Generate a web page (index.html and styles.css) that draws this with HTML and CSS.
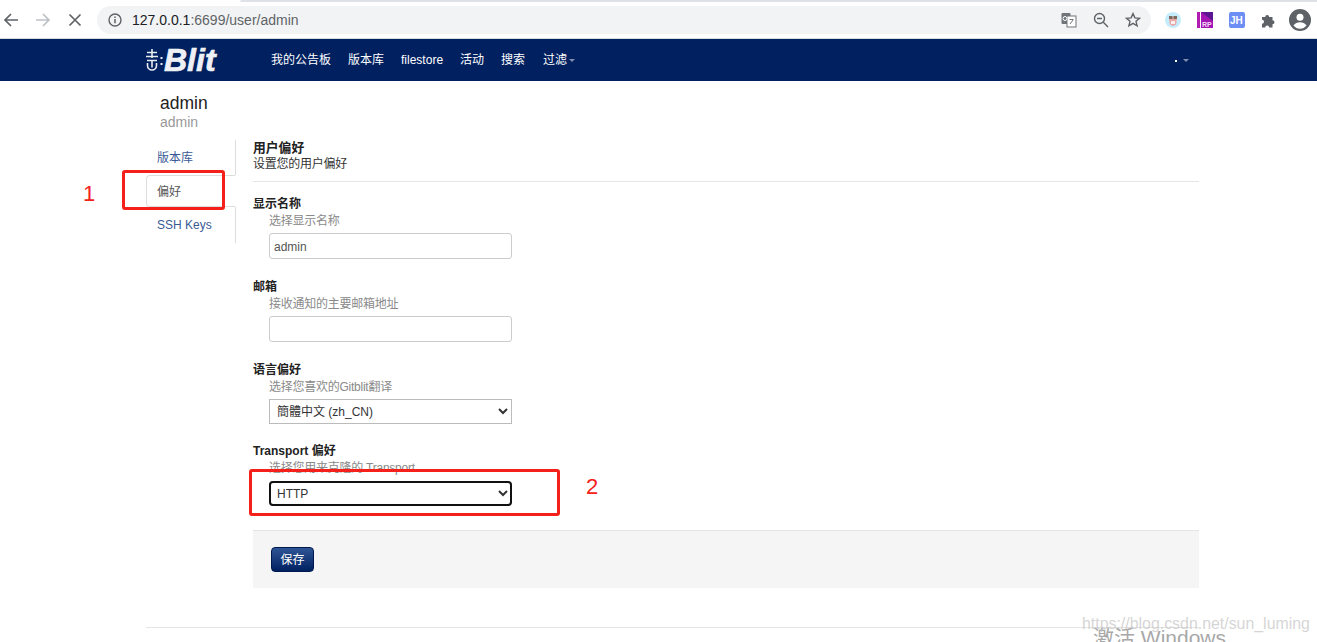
FILE: index.html
```html
<!DOCTYPE html>
<html lang="zh-CN">
<head>
    <meta charset="UTF-8">
    <title>Gitblit - admin</title>
    <link rel="stylesheet" href="styles.css">
</head>
<body>
    <!-- Browser toolbar -->
    <div class="tab-strip"></div>
    <div class="toolbar">
        <span class="tool-btn">
            <svg width="16" height="16" viewBox="0 0 16 16" fill="none" stroke="#5f6368" stroke-width="1.7"><path d="M15 8H2M8 2L2 8l6 6"/></svg>
        </span>
        <span class="tool-btn">
            <svg width="16" height="16" viewBox="0 0 16 16" fill="none" stroke="#bdc1c6" stroke-width="1.7"><path d="M1 8h13M8 2l6 6-6 6"/></svg>
        </span>
        <span class="tool-btn">
            <svg width="14" height="14" viewBox="0 0 14 14" fill="none" stroke="#5f6368" stroke-width="1.7"><path d="M1.5 1.5l11 11M12.5 1.5l-11 11"/></svg>
        </span>
        <div class="address-bar">
            <svg class="info-icon" width="14" height="14" viewBox="0 0 14 14" fill="none"><circle cx="7" cy="7" r="6" stroke="#5f6368" stroke-width="1.4"/><path d="M7 6v4.2M7 3.6v1.4" stroke="#5f6368" stroke-width="1.5"/></svg>
            <span class="url"><span class="url-host">127.0.0.1</span>:6699/user/admin</span>
            <span class="address-icons">
                <svg width="16" height="16" viewBox="0 0 16 16"><rect x="0.5" y="1" width="9" height="11" rx="1" fill="#70757a"/><rect x="6" y="4" width="9" height="11" fill="#fff" stroke="#70757a"/><circle cx="4" cy="6.5" r="2" fill="none" stroke="#fff"/><path d="M8.5 7.5h4M10.5 7v1M9 12l3-4" stroke="#70757a" fill="none"/></svg>
                <svg width="16" height="16" viewBox="0 0 16 16" fill="none" stroke="#5f6368" stroke-width="1.4"><circle cx="6.5" cy="6.5" r="5"/><path d="M4 6.5h5M10.3 10.3l4.7 4.7"/></svg>
                <svg width="16" height="16" viewBox="0 0 16 16" fill="none" stroke="#5f6368" stroke-width="1.4"><path d="M8 1.6l1.900 4.300 4.600.4-3.500 3 1.100 4.600L8 11.400l-4.100 2.500L5 9.300l-3.500-3 4.600-.4z"/></svg>
            </span>
        </div>
        <div class="extensions">
            <span class="tool-btn">
                <svg width="16" height="16" viewBox="0 0 16 16"><circle cx="8" cy="8" r="8" fill="#c5ecfa"/><path d="M4 5h8l-.8 7.500L8 14l-3.200-1.500z" fill="#e8a6a6"/><rect x="4" y="4" width="3.500" height="3" fill="#7d6a5f"/><rect x="8.500" y="4" width="3.500" height="3" fill="#7d6a5f"/><rect x="6" y="9" width="4" height="3" fill="#fbeeee"/></svg>
            </span>
            <span class="tool-btn">
                <svg width="16" height="16" viewBox="0 0 16 16"><rect width="3" height="16" fill="#b01cb0"/><rect x="4" width="12" height="16" fill="#a416b4"/><path d="M4 0l12 9V0z" fill="#5c1590"/><text x="5" y="15" class="ext-text">RP</text></svg>
            </span>
            <span class="tool-btn">
                <svg width="16" height="16" viewBox="0 0 16 16"><rect width="16" height="16" rx="2" fill="#6d8ef5"/><text x="1" y="12" class="ext-text ext-jh">JH</text></svg>
            </span>
            <span class="tool-btn">
                <svg width="16" height="16" viewBox="0 0 16 16"><path d="M1 5h3.200a2 2 0 1 1 4 0h3.300v3.200a2 2 0 1 1 0 4V15.500H8.200a2 2 0 1 0-4 0H1v-3.800a2 2 0 1 0 0-4z" fill="#5f6368"/></svg>
            </span>
            <span class="tool-btn avatar-btn">
                <svg width="22" height="22" viewBox="0 0 22 22"><circle cx="11" cy="11" r="11" fill="#5f6368"/><circle cx="11" cy="8.200" r="3.500" fill="#fff"/><path d="M4.500 16.500c1.500-2.500 4-3.300 6.500-3.300s5 .8 6.500 3.300c-1.500 2-4 3.300-6.500 3.300s-5-1.300-6.500-3.300z" fill="#fff"/></svg>
            </span>
        </div>
    </div>

    <!-- Gitblit navbar -->
    <div class="navbar">
        <a class="brand">
            <svg class="brand-mark" width="18" height="24" viewBox="0 0 18 24" fill="none" stroke="#e8ebf2" stroke-width="1.600"><path d="M6 1v9M1 4.500h10M0 8.500h12M1 12.500h10M1.500 15v2.500a4.500 4.500 0 0 0 9 0V15M6 12.500v7"/><path d="M14.500 10h2M14.500 16h2" stroke-width="2"/></svg>
            <span class="brand-text">Blit</span>
        </a>
        <ul class="nav-links">
            <li>我的公告板</li>
            <li>版本库</li>
            <li>filestore</li>
            <li>活动</li>
            <li>搜索</li>
            <li class="has-caret">过滤<span class="caret"></span></li>
        </ul>
        <div class="user-menu"><span class="user-dot"></span><span class="caret"></span></div>
    </div>

    <div class="container">
        <div class="page-head">
            <div class="user-name">admin</div>
            <div class="user-sub">admin</div>
        </div>

        <div class="columns">
            <ul class="side-tabs">
                <li class="side-tab first"><a>版本库</a></li>
                <li class="side-tab active"><a>偏好</a></li>
                <li class="side-tab last"><a>SSH Keys</a></li>
            </ul>

            <form class="prefs">
                <div class="prefs-head">
                    <div class="label prefs-title">用户偏好</div>
                    <div class="prefs-sub">设置您的用户偏好</div>
                </div>

                <div class="field">
                    <div class="label">显示名称</div>
                    <div class="help">选择显示名称</div>
                    <input class="text-input" type="text" value="admin">
                </div>
                <div class="field">
                    <div class="label">邮箱</div>
                    <div class="help">接收通知的主要邮箱地址</div>
                    <input class="text-input" type="text">
                </div>
                <div class="field field-lang">
                    <div class="label">语言偏好</div>
                    <div class="help">选择您喜欢的Gitblit翻译</div>
                    <select class="select-input">
                        <option>簡體中文 (zh_CN)</option>
                    </select>
                </div>
                <div class="field field-last">
                    <div class="label">Transport 偏好</div>
                    <div class="help">选择您用来克隆的 Transport</div>
                    <select class="select-input focused">
                        <option>HTTP</option>
                    </select>
                </div>

                <div class="form-actions">
                    <button class="btn-save" type="button">保存</button>
                </div>
            </form>
        </div>

        <div class="footer-line"></div>
    </div>

    <!-- Annotations added over the screenshot -->
    <div class="mark mark-one"></div>
    <div class="mark mark-two"></div>
    <div class="mark-num num-one">1</div>
    <div class="mark-num num-two">2</div>

    <div class="activate">激活 Windows</div>
    <div class="blog-url">https://blog.csdn.net/sun_luming</div>
</body>
</html>
```

FILE: styles.css
```css
html {
    overflow: hidden;
}
body {
    margin: 0;
    height: 642px;
    overflow: hidden;
    position: relative;
    background-color: #fff;
    font-family: "Liberation Sans", "Noto Sans CJK SC", sans-serif;
    font-size: 12px;
    color: #222;
}
ul {
    list-style: none;
    margin: 0;
    padding: 0;
}

/* browser toolbar */
.tab-strip {
    height: 2px;
    margin-left: 240px;
    background-color: #dee1e6;
    border-top-left-radius: 4px;
}
.toolbar {
    display: flex;
    align-items: center;
    height: 36px;
    border-bottom: 1px solid #d8dade;
}
.tool-btn {
    display: flex;
    align-items: center;
    justify-content: center;
    width: 22px;
    height: 24px;
    margin-right: 10px;
}
.address-bar {
    display: flex;
    align-items: center;
    width: 1054px;
    height: 28px;
    margin-left: 1px;
    margin-right: 11px;
    border-radius: 14px;
    background-color: #f1f3f4;
    box-sizing: border-box;
    padding-left: 11px;
}
.url {
    margin-left: 10px;
    font-size: 14px;
    color: #5f6368;
}
.url-host {
    color: #202124;
}
.address-icons {
    display: flex;
    gap: 16px;
    margin-left: auto;
    margin-right: 10px;
}
.extensions {
    display: flex;
}
.extensions .avatar-btn {
    margin-left: -1px;
    margin-right: 0;
}
.ext-text {
    font-family: "Liberation Sans", sans-serif;
    font-size: 7px;
    font-weight: bold;
    fill: #f5d8f5;
}
.ext-jh {
    font-size: 10px;
    fill: #fff;
}

/* navbar */
.navbar {
    display: flex;
    align-items: center;
    height: 42px;
    padding-left: 146px;
    background-color: #002060;
    color: #fff;
}
.brand {
    display: flex;
    align-items: center;
    width: 125px;
}
.brand-mark {
    flex: none;
}
.brand-text {
    font-size: 32px;
    font-weight: bold;
    font-style: italic;
    line-height: 30px;
    color: #eef0f5;
    -webkit-text-stroke: 0.7px #eef0f5;
}
.nav-links {
    display: flex;
    gap: 17px;
    line-height: 16px;
}
.has-caret {
    display: flex;
    align-items: center;
    margin-left: 1px;
}
.caret {
    display: inline-block;
    margin-left: 2px;
    border-top: 3px solid #7f8fb0;
    border-left: 3.500px solid transparent;
    border-right: 3.500px solid transparent;
}
.user-menu {
    display: flex;
    align-items: center;
    margin-left: auto;
    margin-right: 128px;
}
.user-dot {
    width: 2px;
    height: 2px;
    margin-top: 2px;
    margin-right: 4px;
    background-color: #fff;
}

/* page */
.container {
    width: 1053px;
    margin-left: 146px;
}
.page-head {
    padding: 12px 0 9px 14px;
}
.user-name {
    font-size: 17.500px;
    line-height: 20px;
    color: #222;
}
.user-sub {
    font-size: 14px;
    line-height: 18px;
    color: #999;
}
.columns {
    display: flex;
}

/* side tabs */
.side-tabs {
    flex: none;
    width: 90px;
}
.side-tab {
    box-sizing: border-box;
    display: flex;
    align-items: center;
    padding-left: 11px;
    border-right: 1px solid #ddd;
    color: #3a5a96;
}
.side-tab.first {
    height: 35px;
    padding-bottom: 2px;
}
.side-tab.active {
    height: 32px;
    border: 1px solid #ddd;
    border-right-color: #fff;
    border-radius: 4px 0 0 4px;
    padding-left: 10px;
    padding-bottom: 2px;
    color: #555;
}
.side-tab.last {
    height: 36px;
}

/* form */
.prefs {
    flex: 1;
    margin-left: 17px;
    line-height: 16px;
}
.prefs-head {
    padding-bottom: 9px;
    border-bottom: 1px solid #e5e5e5;
    margin-bottom: 14px;
}
.label {
    font-weight: bold;
    color: #222;
}
.prefs-title {
    font-size: 12.800px;
}
.prefs-sub {
    letter-spacing: -0.25px;
    color: #333;
}
.field {
    margin-bottom: 20px;
}
.field-lang {
    margin-bottom: 19px;
}
.field-last {
    margin-bottom: 24px;
}
.help {
    margin: 1px 0 4px 16px;
    letter-spacing: -0.25px;
    color: #8a8a8a;
}
.text-input {
    display: block;
    box-sizing: border-box;
    width: 243px;
    height: 26px;
    margin-left: 16px;
    padding: 1px 4px 0;
    border: 1px solid #ccc;
    border-radius: 3px;
    font-family: inherit;
    font-size: 12px;
    color: #555;
}
.select-input {
    display: block;
    box-sizing: border-box;
    width: 243px;
    height: 25px;
    margin-left: 16px;
    padding: 1px 0 0 3px;
    border: 1px solid #bbb;
    background-color: #fff;
    font-family: inherit;
    font-size: 12px;
    color: #333;
}
.focused {
    margin-top: 5px;
    padding-top: 0;
    outline: 2px solid #111;
    outline-offset: -2px;
    border-radius: 4px;
}
.form-actions {
    box-sizing: border-box;
    height: 58px;
    padding: 16px 0 0 18px;
    border-top: 1px solid #e5e5e5;
    background-color: #f5f5f5;
}
.btn-save {
    display: block;
    width: 43px;
    height: 25px;
    padding: 0 0 2px;
    border: 1px solid #00194d;
    border-radius: 4px;
    background-image: linear-gradient(to bottom, #2f5596, #002060);
    color: #fff;
    font-family: inherit;
    font-size: 12px;
}
.footer-line {
    margin-top: 39px;
    border-top: 1px solid #e5e5e5;
}

/* annotations */
.mark {
    position: absolute;
    box-sizing: border-box;
    border: 3px solid #f5201a;
    border-radius: 3px;
}
.mark-one {
    left: 122px;
    top: 170px;
    width: 103px;
    height: 40px;
}
.mark-two {
    left: 249px;
    top: 469px;
    width: 311px;
    height: 47px;
}
.mark-num {
    position: absolute;
    font-size: 22px;
    line-height: 24px;
    color: #f5201a;
}
.num-one {
    left: 83px;
    top: 182px;
}
.num-two {
    left: 586px;
    top: 475px;
}
.activate {
    position: absolute;
    left: 1093px;
    top: 625px;
    font-size: 21px;
    line-height: 26px;
    color: #a8a8a8;
}
.blog-url {
    position: absolute;
    left: 1082px;
    top: 614px;
    font-size: 15.900px;
    line-height: 20px;
    color: rgba(195, 195, 195, 0.7);
}
```
